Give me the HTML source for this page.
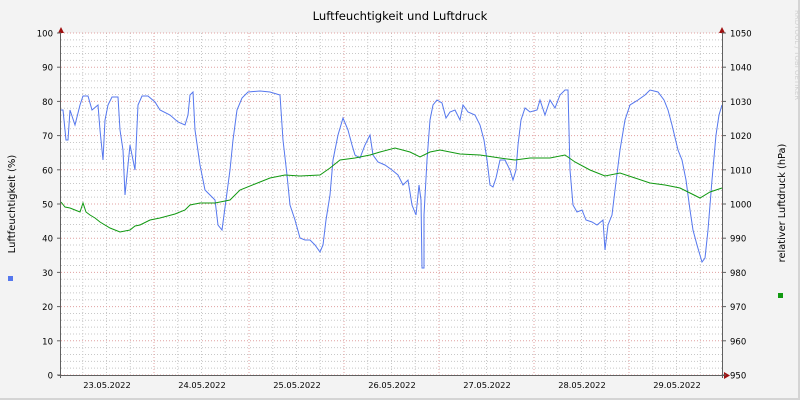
<!DOCTYPE html>
<html><head><meta charset="utf-8"><style>
html,body{margin:0;padding:0;background:#f3f3f3}
svg{display:block;font-family:"DejaVu Sans","Liberation Sans",sans-serif}
</style></head><body>
<svg id="s" width="800" height="400" xmlns="http://www.w3.org/2000/svg">
<rect x="0" y="0" width="800" height="400" fill="#d4d4d4"/>
<rect x="0" y="0" width="798" height="398" fill="#f3f3f3"/>
<rect x="61" y="33" width="661" height="342" fill="#ffffff"/>
<g id="grid"></g>
<polyline fill="none" stroke="#5577ee" stroke-width="1" points="61,110 63,110 66,140 68,140 70,110 75,125 80,105 83,96 88,96 92,110 98,105 100,130 103,160 105,120 108,105 112,97 118,97 120,130 123,150 125,195 128,165 130,145 135,170 138,105 142,96 148,96 155,102 160,110 170,115 178,122 185,125 188,115 190,95 193,92 195,130 200,165 205,190 210,195 215,200 218,225 222,230 226,200 230,170 233,140 237,110 242,98 248,92 260,91 270,92 280,95 283,140 287,175 290,205 295,220 300,238 305,240 310,240 315,245 320,252 323,245 326,220 330,195 333,160 338,135 343,118 348,130 352,145 355,155 360,158 365,145 370,135 373,155 378,162 385,165 392,170 398,175 403,185 408,180 412,205 416,215 419,185 421,200 422,268 424,268 424,215 427,160 430,120 433,105 437,100 442,103 446,118 450,112 455,110 460,120 463,105 468,112 475,115 480,125 484,140 487,160 490,185 493,187 496,178 500,160 505,160 510,170 513,180 516,170 518,145 521,120 525,108 530,112 537,110 540,100 545,115 550,100 555,108 560,95 565,90 568,90 570,170 573,205 577,212 582,210 586,220 592,222 597,225 603,220 605,250 608,225 612,215 615,190 620,150 625,120 630,105 638,100 645,95 650,90 658,92 664,100 668,110 672,125 678,150 682,160 686,180 690,210 693,230 697,245 702,262 705,258 708,230 712,180 716,135 719,115 722,105"/>
<polyline fill="none" stroke="#119911" stroke-width="1" points="61,202 65,207 70,208 75,210 80,212 83,203 86,212 90,215 95,218 100,222 110,228 120,232 130,230 135,226 140,225 150,220 160,218 175,214 185,210 190,205 200,203 215,203 230,200 240,190 255,184 270,178 285,175 300,176 320,175 330,168 340,160 355,158 370,155 380,152 395,148 410,152 420,157 430,152 440,150 460,154 480,155 500,158 515,160 530,158 550,158 565,155 575,162 590,170 605,176 620,173 635,178 650,183 665,185 680,188 690,193 700,198 710,192 722,188"/>
<g id="axes"></g>
<text x="400" y="20" font-size="11.6" text-anchor="middle" fill="#000">Luftfeuchtigkeit und Luftdruck</text>
<text transform="translate(15,204) rotate(-90)" font-size="10" text-anchor="middle" fill="#000">Luftfeuchtigkeit (%)</text>
<text transform="translate(785,203) rotate(-90)" font-size="9.8" text-anchor="middle" fill="#000">relativer Luftdruck (hPa)</text>
<text transform="translate(795,10) rotate(90)" font-size="7" fill="#d0d0d0">RRDTOOL / TOBI OETIKER</text>
<rect x="8" y="276" width="5" height="5" fill="#5577ee"/>
<rect x="778" y="293" width="5" height="5" fill="#119911"/>
</svg>
<script>
var g=document.getElementById('grid'),a=document.getElementById('axes'),h='';
for(var v=0;v<=100;v+=2){var y=375-v*3.42;if(v%10){h+='<line x1="61" x2="722" y1="'+y+'" y2="'+y+'" stroke="#c8c8c8" stroke-dasharray="1,2"/>';}}
var days=['23.05.2022','24.05.2022','25.05.2022','26.05.2022','27.05.2022','28.05.2022','29.05.2022'];
for(var i=0;i<32;i++){var x=59+i*23.75;if(x<62||x>721)continue;if((i%4)!=0)h+='<line x1="'+x+'" x2="'+x+'" y1="33" y2="375" stroke="#c8c8c8" stroke-dasharray="1,2"/>';}
for(var v=0;v<=100;v+=10){var y=375-v*3.42;h+='<line x1="61" x2="722" y1="'+y+'" y2="'+y+'" stroke="#e0a0a0" stroke-dasharray="1,2"/>';}
for(var d=1;d<7;d++){var x=59+d*95;h+='<line x1="'+x+'" x2="'+x+'" y1="33" y2="375" stroke="#e0a0a0" stroke-dasharray="1,2"/>';}
g.innerHTML=h;h='';
h+='<line x1="60.5" x2="60.5" y1="31" y2="378" stroke="#606060"/><line x1="722.5" x2="722.5" y1="31" y2="378" stroke="#606060"/><line x1="58" x2="726" y1="375.5" y2="375.5" stroke="#606060"/>';
h+='<polygon points="58,33 64,33 61,27" fill="#a01010"/><polygon points="719,33 725,33 722,27" fill="#a01010"/><polygon points="724,372 724,379 730,375.5" fill="#a01010"/>';
for(var v=0;v<=100;v+=10){var y=375-v*3.42;h+='<line x1="57" x2="61" y1="'+y+'" y2="'+y+'" stroke="#606060"/><line x1="722" x2="726" y1="'+y+'" y2="'+y+'" stroke="#606060"/>';
h+='<text x="53" y="'+(y+3.5)+'" font-size="8.5" text-anchor="end">'+v+'</text><text x="730" y="'+(y+3.5)+'" font-size="8.5">'+(950+v)+'</text>';}
for(var d=0;d<7;d++){var x=59+d*95+48;h+='<text x="'+x+'" y="388" font-size="8.3" text-anchor="middle">'+days[d]+'</text>';}
a.innerHTML=h;
</script>
</body></html>
